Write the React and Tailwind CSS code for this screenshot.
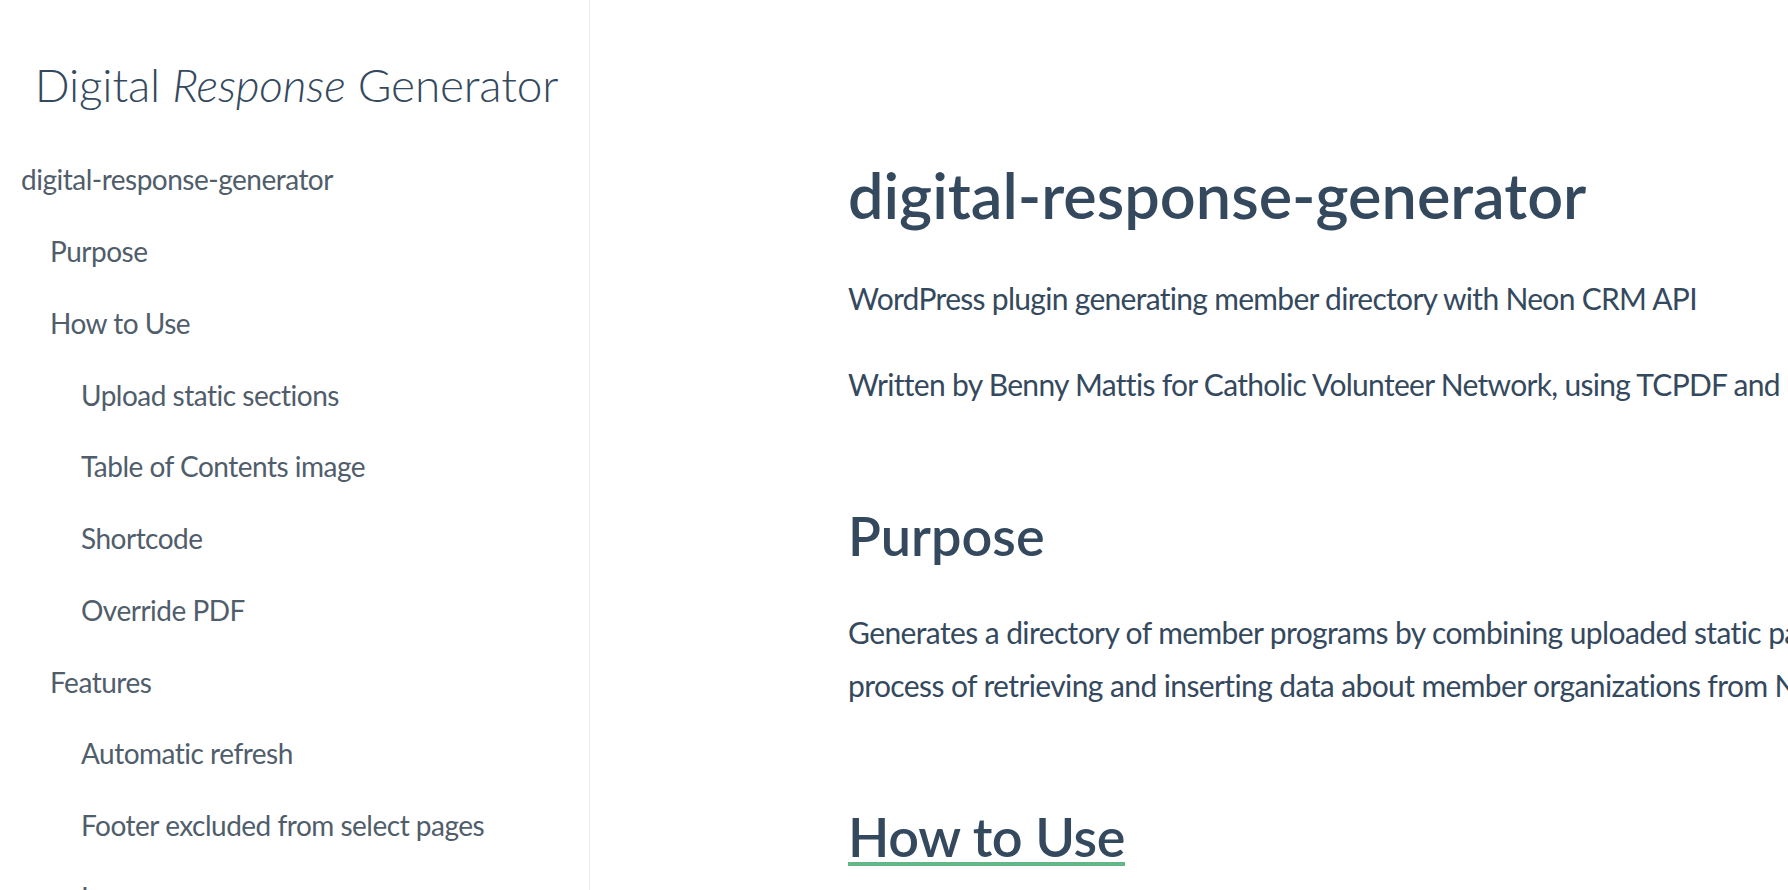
import React from "react";

const navItems = [
  { label: "digital-response-generator", level: 1 },
  { label: "Purpose", level: 2 },
  { label: "How to Use", level: 2 },
  { label: "Upload static sections", level: 3 },
  { label: "Table of Contents image", level: 3 },
  { label: "Shortcode", level: 3 },
  { label: "Override PDF", level: 3 },
  { label: "Features", level: 2 },
  { label: "Automatic refresh", level: 3 },
  { label: "Footer excluded from select pages", level: 3 },
  { label: "Logos", level: 3 },
  { label: "Links", level: 3 },
];

const indent = {
  1: "pl-[21px]",
  2: "pl-[50px]",
  3: "pl-[81px]",
};

export default function App() {
  return (
    <div className="flex h-screen w-full overflow-hidden bg-white font-['Lato','Noto_Sans',sans-serif] text-[#34495e]">
      {/* sidebar */}
      <aside className="w-[590px] shrink-0 border-r border-[#ededed] overflow-hidden">
        <h1 className="pt-[55px] pl-[4px] text-center text-[46px] font-light leading-[60px] tracking-[-0.2px] text-[#34495e]">
          Digital <em>Response</em> Generator
        </h1>
        <ul className="mt-[29px]">
          {navItems.map((item) => (
            <li
              key={item.label}
              className={`${indent[item.level]} py-[13.2px] text-[28px] leading-[45.4px] tracking-[-0.5px] text-[#505d6b] whitespace-nowrap`}
            >
              {item.label}
            </li>
          ))}
        </ul>
      </aside>

      {/* content */}
      <main className="flex-1 min-w-0 overflow-hidden">
        <article className="pl-[258px] pt-[155px] w-[1500px]">
          <h1 className="text-[63px] font-semibold leading-[79px] text-[#34495e] whitespace-nowrap">
            digital-response-generator
          </h1>
          <p className="mt-[38px] text-[30px] leading-[52.8px] tracking-[-0.7px] whitespace-nowrap">
            WordPress plugin generating member directory with Neon CRM API
          </p>
          <p className="mt-[33px] text-[30px] leading-[52.8px] tracking-[-0.7px] whitespace-nowrap">
            Written by Benny Mattis for Catholic Volunteer Network, using TCPDF and FPDI.
          </p>
          <h2 className="mt-[90px] text-[54px] font-semibold leading-[69.3px] text-[#34495e]">
            Purpose
          </h2>
          <p className="mt-[36px] text-[30px] leading-[52.8px] tracking-[-0.6px] whitespace-nowrap">
            Generates a directory of member programs by combining uploaded static pages with automatically generated pages. Automates the
            <br />
            process of retrieving and inserting data about member organizations from Neon CRM.
          </p>
          <h2 className="mt-[91px] text-[54px] font-semibold leading-[69.3px] tracking-[-0.4px] text-[#34495e]">
            <a className="underline decoration-4 decoration-[#62b687] underline-offset-[5px]">How to Use</a>
          </h2>
        </article>
      </main>
    </div>
  );
}
